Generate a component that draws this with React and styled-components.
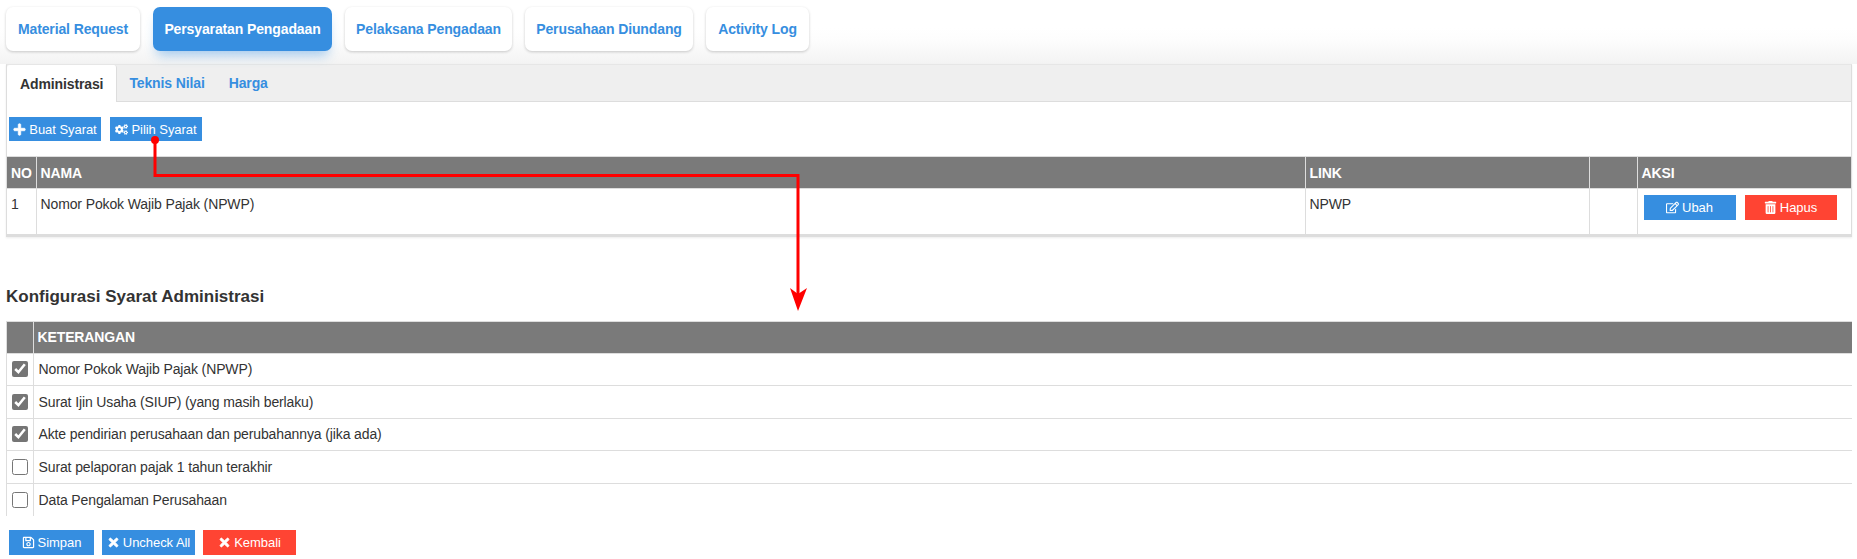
import styled, { createGlobalStyle } from 'styled-components';
import { FaPlus, FaCogs, FaRegEdit, FaTrashAlt, FaRegSave, FaTimes } from 'react-icons/fa';

const GlobalStyle = createGlobalStyle`
  html, body { margin: 0; padding: 0; background: #fff; }
  body { font-family: "Liberation Sans", Arial, sans-serif; font-size: 14px; color: #333; letter-spacing: -.12px; }
`;

const Page = styled.div`
  position: relative;
  height: 559px;
  overflow: hidden;
  padding: 0 5px 0 6px;
  box-sizing: border-box;
`;
const Header = styled.header`
  margin: 0 -5px 0 -6px;
  padding: 7px 5px 13px 6px;
  background: linear-gradient(#fff 28px, #fdfdfd 40px, #f3f3f3 64px);
`;
const StepNav = styled.nav`
  display: flex;
  gap: 13px;
`;
const StepTab = styled.a`
  display: flex;
  align-items: center;
  justify-content: center;
  width: ${(p) => p.$w}px;
  height: 44px;
  border-radius: 7px;
  font-weight: 700;
  font-size: 14px;
  background: ${(p) => (p.$active ? '#368ee0' : '#fff')};
  color: ${(p) => (p.$active ? '#fff' : '#368ee0')};
  box-shadow: ${(p) => (p.$active ? '0 8px 12px -4px rgba(54,142,224,.45)' : '0 1px 3px rgba(0,0,0,.2)')};
`;
const Panel = styled.section`
  border: 1px solid #ddd;
  border-top-color: #e6e6e6;
  border-bottom-width: 3px;
  box-shadow: 0 1px 2px rgba(0,0,0,.08);
`;
const PanelTabs = styled.div`
  display: flex;
  height: 36px;
  background: #efefef;
  border-bottom: 1px solid #ddd;
`;
const PanelTab = styled.a`
  display: flex;
  align-items: center;
  justify-content: center;
  height: ${(p) => (p.$active ? '37px' : '36px')};
  padding: 0 ${(p) => (p.$active ? '13px' : '12px')};
  box-sizing: border-box;
  font-weight: 700;
  font-size: 14px;
  color: ${(p) => (p.$active ? '#333' : '#368ee0')};
  background: ${(p) => (p.$active ? '#fff' : 'transparent')};
  border-right: ${(p) => (p.$active ? '1px solid #ddd' : '0')};
  border-radius: 3px 3px 0 0;
`;
const Toolbar = styled.div`
  display: flex;
  gap: 9px;
  padding: 15px 2px;
`;
const Btn = styled.button`
  display: inline-flex;
  align-items: center;
  justify-content: center;
  gap: 3px;
  width: ${(p) => p.$w}px;
  height: ${(p) => p.$h || 25}px;
  padding: 0;
  border: 0;
  font-family: inherit;
  font-size: 13px;
  letter-spacing: -.05px;
  color: #fff;
  background: ${(p) => (p.$danger ? '#ff4433' : '#368ee0')};
  svg { font-size: 13px; }
`;
const HeavyPlus = styled(FaPlus)`
  stroke: currentColor;
  stroke-width: 30;
`;
const HeavyTimes = styled(FaTimes)`
  stroke: currentColor;
  stroke-width: 30;
`;
const Table = styled.table`
  width: 100%;
  border-collapse: collapse;
  table-layout: fixed;
`;
const Th = styled.th`
  height: 32px;
  padding: 0 4px;
  box-sizing: border-box;
  background: #7a7a7a;
  color: #fff;
  font-size: 14px;
  font-weight: 700;
  text-align: left;
  border: 1px solid #ddd;
  &:first-child { border-left: 0; }
  &:last-child { border-right: 0; }
`;
const Td = styled.td`
  height: 45px;
  padding: 7px 4px 0;
  box-sizing: border-box;
  vertical-align: top;
  border-right: 1px solid #ddd;
  &:last-child { border-right: 0; }
`;
const ActionCell = styled(Td)`
  padding-top: 6px;
`;
const RowActions = styled.div`
  display: flex;
  gap: 9px;
  padding: 0 2px;
`;
const Heading = styled.h3`
  margin: 51px 0 15px;
  font-size: 17px;
  line-height: 18px;
  font-weight: 700;
  letter-spacing: 0;
  color: #333;
`;
const ConfigBox = styled.div`
  height: 195px;
  overflow: hidden;
  border-left: 1px solid #ddd;
`;
const ConfigRow = styled.tr`
  border-bottom: 1px solid #ddd;
  &:last-child { border-bottom: 0; }
`;
const CheckCell = styled.td`
  height: 32.5px;
  padding: 0;
  box-sizing: border-box;
  text-align: center;
  border-right: 1px solid #ddd;
`;
const TextCell = styled.td`
  padding: 0 5px;
`;
const Check = styled.input`
  display: block;
  width: 16px;
  height: 16px;
  margin: 0 auto;
  accent-color: #757575;
`;
const Footer = styled.div`
  display: flex;
  gap: 8px;
  padding: 14px 3px 0;
`;
const Arrow = styled.svg`
  position: absolute;
  left: 0;
  top: 0;
  pointer-events: none;
`;

const steps = [
  { name: 'Material Request', w: 134 },
  { name: 'Persyaratan Pengadaan', w: 179, active: true },
  { name: 'Pelaksana Pengadaan', w: 167 },
  { name: 'Perusahaan Diundang', w: 168 },
  { name: 'Activity Log', w: 103 },
];
const syarat = [
  { text: 'Nomor Pokok Wajib Pajak (NPWP)', checked: true },
  { text: 'Surat Ijin Usaha (SIUP) (yang masih berlaku)', checked: true },
  { text: 'Akte pendirian perusahaan dan perubahannya (jika ada)', checked: true },
  { text: 'Surat pelaporan pajak 1 tahun terakhir', checked: false },
  { text: 'Data Pengalaman Perusahaan', checked: false },
];

function App() {
  return (
    <Page>
      <GlobalStyle />
      <Header>
        <StepNav>
          {steps.map((s) => (
            <StepTab key={s.name} $w={s.w} $active={s.active}>{s.name}</StepTab>
          ))}
        </StepNav>
      </Header>
      <Panel>
        <PanelTabs>
          <PanelTab $active>Administrasi</PanelTab>
          <PanelTab>Teknis Nilai</PanelTab>
          <PanelTab>Harga</PanelTab>
        </PanelTabs>
        <Toolbar>
          <Btn $w={92} $h={24}><HeavyPlus />Buat Syarat</Btn>
          <Btn $w={92} $h={24}><FaCogs />Pilih Syarat</Btn>
        </Toolbar>
        <Table>
          <colgroup>
            <col style={{ width: 29 }} />
            <col />
            <col style={{ width: 284 }} />
            <col style={{ width: 48 }} />
            <col style={{ width: 214 }} />
          </colgroup>
          <thead>
            <tr>
              <Th>NO</Th>
              <Th>NAMA</Th>
              <Th>LINK</Th>
              <Th />
              <Th>AKSI</Th>
            </tr>
          </thead>
          <tbody>
            <tr>
              <Td>1</Td>
              <Td>Nomor Pokok Wajib Pajak (NPWP)</Td>
              <Td>NPWP</Td>
              <Td />
              <ActionCell>
                <RowActions>
                  <Btn $w={92}><FaRegEdit />Ubah</Btn>
                  <Btn $w={92} $danger><FaTrashAlt />Hapus</Btn>
                </RowActions>
              </ActionCell>
            </tr>
          </tbody>
        </Table>
      </Panel>
      <Heading>Konfigurasi Syarat Administrasi</Heading>
      <ConfigBox>
        <Table>
          <colgroup>
            <col style={{ width: 26 }} />
            <col />
          </colgroup>
          <thead>
            <tr>
              <Th />
              <Th>KETERANGAN</Th>
            </tr>
          </thead>
          <tbody>
            {syarat.map((s) => (
              <ConfigRow key={s.text}>
                <CheckCell><Check type="checkbox" defaultChecked={s.checked} /></CheckCell>
                <TextCell>{s.text}</TextCell>
              </ConfigRow>
            ))}
          </tbody>
        </Table>
      </ConfigBox>
      <Footer>
        <Btn $w={85}><FaRegSave />Simpan</Btn>
        <Btn $w={93}><HeavyTimes />Uncheck All</Btn>
        <Btn $w={93} $danger><HeavyTimes />Kembali</Btn>
      </Footer>
      <Arrow width="1857" height="559" viewBox="0 0 1857 559">
        <circle cx="155" cy="140" r="4" fill="#ff0000" />
        <path d="M155 140V175.500H798V295" fill="none" stroke="#ff0000" strokeWidth="3" />
        <path d="M790 288L798 311L807 288L798 294Z" fill="#ff0000" />
      </Arrow>
    </Page>
  );
}

export default App;
